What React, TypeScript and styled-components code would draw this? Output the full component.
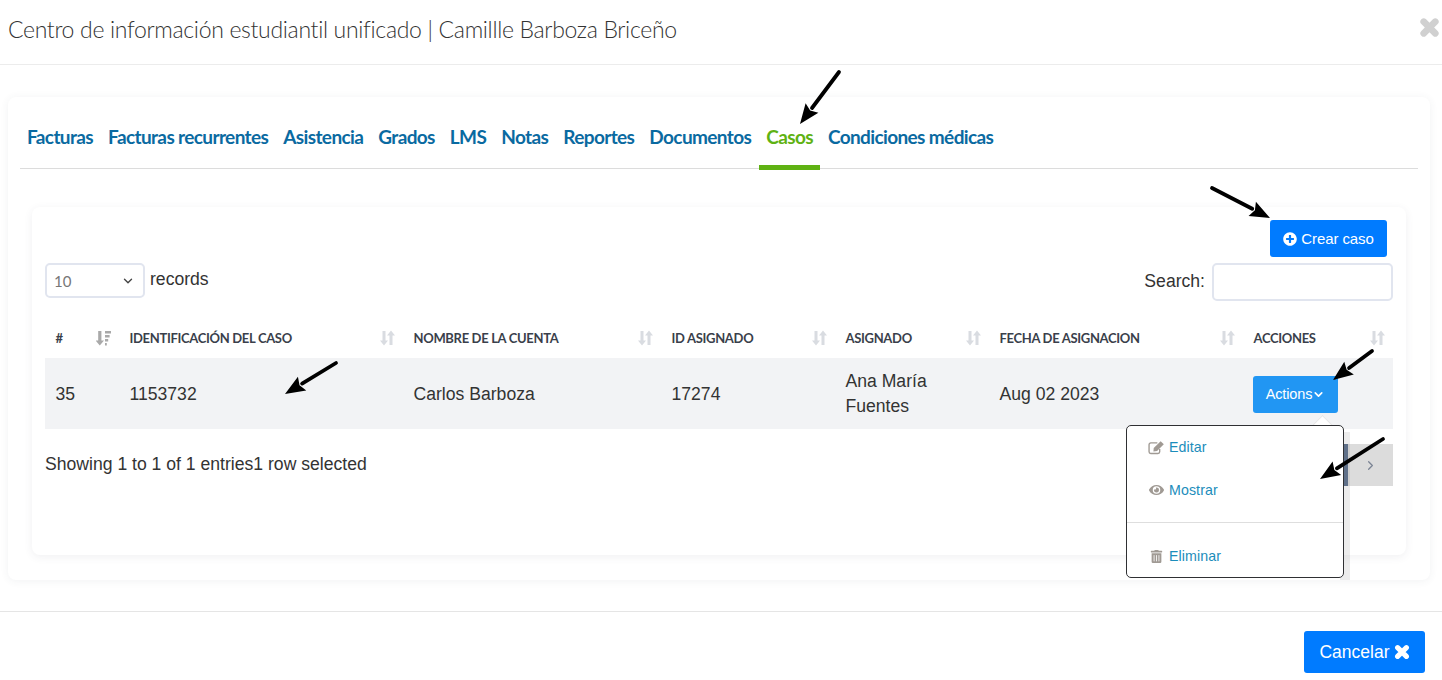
import React from "react";
import styled, { createGlobalStyle } from "styled-components";
import { FaEye, FaPlusCircle, FaTrashAlt } from "react-icons/fa";
import { ChevronDown, ChevronRight } from "lucide-react";

const GlobalStyle = createGlobalStyle`
  html, body {
    margin: 0;
    height: 100%;
    background: #fff;
    overflow: hidden;
  }
  * {
    box-sizing: border-box;
  }
  body {
    font-family: "Liberation Sans", Arial, sans-serif;
    color: #333;
  }
`;

const Page = styled.div`
  position: relative;
  width: 1442px;
  height: 680px;
  overflow: hidden;
`;

const Header = styled.header`
  height: 65px;
  border-bottom: 1px solid #ececec;
  padding: 0 0 7px 8px;
  display: flex;
  justify-content: space-between;
  align-items: center;
`;

const Title = styled.h1`
  margin: 0;
  font-family: Lato, sans-serif;
  font-weight: 300;
  font-size: 23px;
  color: #333;
  letter-spacing: -0.32px;
`;

const CloseBtn = styled.span`
  display: flex;
  color: #d0d0d0;
  margin: 0 2px 2px 0;
`;

const Body = styled.main`
  padding: 32px 12px 0 8px;
  height: 547px;
  border-bottom: 1px solid #e5e5e5;
`;

const OuterCard = styled.section`
  height: 483px;
  padding: 0 12px;
  border-radius: 8px;
  box-shadow: 0 1px 8px rgba(60, 70, 90, 0.07);
`;

const Tabs = styled.nav`
  height: 72px;
  border-bottom: 1px solid #dcdcdc;
  display: flex;
  align-items: flex-start;
`;

const Tab = styled.a<{ $active?: boolean }>`
  height: 73px;
  padding: 28px 7px 0;
  margin-right: 1px;
  font-family: Lato, sans-serif;
  font-weight: 700;
  font-size: 19px;
  letter-spacing: -0.62px;
  line-height: 23px;
  color: ${(props) => (props.$active ? "#5fb213" : "#0a6aa1")};
  border-bottom: 5px solid ${(props) => (props.$active ? "#5fb213" : "transparent")};
`;

const InnerCard = styled.section`
  margin: 38px 0 0 12px;
  width: 1374px;
  height: 348px;
  padding: 13px 13px 0;
  border-radius: 8px;
  box-shadow: 0 2px 8px rgba(60, 70, 90, 0.08);
`;

const CreateRow = styled.div`
  display: flex;
  justify-content: flex-end;
  padding-right: 6px;
`;

const CreateBtn = styled.button`
  width: 117px;
  height: 37px;
  border: none;
  border-radius: 3px;
  background: #007bff;
  color: #fff;
  font-family: "Liberation Sans", sans-serif;
  font-size: 15px;
  letter-spacing: -0.1px;
  display: flex;
  align-items: center;
  justify-content: center;
  gap: 4px;
`;

const Controls = styled.div`
  display: flex;
  justify-content: space-between;
  margin-top: 6px;
  height: 57px;
`;

const LengthControl = styled.label`
  display: flex;
  align-items: flex-start;
  gap: 5px;
  font-size: 17.6px;
  line-height: 32px;
`;

const SelectBox = styled.span`
  width: 100px;
  height: 35px;
  border: 2px solid #e1e5ef;
  border-radius: 5px;
  padding: 0 8px 0 7px;
  display: flex;
  align-items: center;
  justify-content: space-between;
  font-family: Lato, sans-serif;
  font-size: 15px;
  color: #777;
`;

const SearchControl = styled.label`
  display: flex;
  align-items: flex-start;
  gap: 7px;
  font-size: 17.6px;
  line-height: 36px;
`;

const SearchInput = styled.input`
  width: 181px;
  height: 38px;
  border: 2px solid #e1e5ef;
  border-radius: 5px;
  background: #fff;
`;

const Table = styled.table`
  width: 1348px;
  table-layout: fixed;
  border-collapse: collapse;
`;

const Th = styled.th`
  position: relative;
  height: 38px;
  padding: 0 10px 2px 10.5px;
  text-align: left;
  font-family: Lato, sans-serif;
  font-weight: 700;
  font-size: 13px;
  letter-spacing: -0.32px;
  color: #3a3f4b;
`;

const SortSlot = styled.span<{ $on?: boolean }>`
  position: absolute;
  right: 8px;
  top: 10px;
  display: flex;
  color: ${(props) => (props.$on ? "#a9a9a9" : "#d9dce1")};
`;

const Tr = styled.tr`
  background: #f2f3f5;
`;

const Td = styled.td`
  height: 71px;
  padding: 1px 10px 0 10.5px;
  font-size: 17.6px;
  line-height: 25px;
  color: #333;
`;

const ActionsBtn = styled.button`
  width: 85px;
  height: 37px;
  margin-left: -0.5px;
  border: none;
  border-radius: 3px;
  background: #2196f3;
  color: #fff;
  font-family: "Liberation Sans", sans-serif;
  font-size: 14.5px;
  letter-spacing: -0.15px;
  display: flex;
  align-items: center;
  justify-content: center;
`;

const Info = styled.div`
  margin-top: 23px;
  font-size: 17.6px;
  line-height: 24px;
`;

const Footer = styled.footer`
  display: flex;
  justify-content: flex-end;
  padding: 19px 17px 0 0;
`;

const CancelBtn = styled.button`
  width: 121px;
  height: 42px;
  border: none;
  border-radius: 3px;
  background: #007bff;
  color: #fff;
  font-family: "Liberation Sans", sans-serif;
  font-size: 17.5px;
  display: flex;
  align-items: center;
  justify-content: center;
  gap: 4px;
`;

const Pager = styled.div`
  position: absolute;
  left: 1344px;
  top: 444px;
  width: 49px;
  height: 42px;
  background: #dcdcdc;
  border-left: 4px solid #5b6f8c;
  color: #7b8494;
  display: flex;
  align-items: center;
  justify-content: center;
`;

const MenuShadow = styled.div`
  position: absolute;
  left: 1340px;
  top: 432px;
  width: 10px;
  height: 148px;
  background: rgba(120, 120, 120, 0.14);
`;

const MenuNotch = styled.div`
  position: absolute;
  left: 1315px;
  top: 418px;
  width: 15px;
  height: 15px;
  background: #fff;
  transform: rotate(45deg);
  border-top: 1px solid #e6e6e6;
  border-left: 1px solid #e6e6e6;
`;

const Menu = styled.div`
  position: absolute;
  left: 1126px;
  top: 425px;
  width: 218px;
  height: 153px;
  background: #fff;
  border: 1px solid #2f3033;
  border-radius: 5px;
  padding-top: 10px;
`;

const MenuItem = styled.a`
  height: 22px;
  margin-bottom: 21px;
  padding-left: 22px;
  display: flex;
  align-items: center;
  gap: 5px;
  font-size: 14.2px;
  letter-spacing: 0.1px;
  color: #1c8dbb;
`;

const MenuIcon = styled.span`
  display: flex;
  width: 15px;
  justify-content: center;
  color: #a09a94;
`;

const Divider = styled.hr`
  margin: 0 0 22px;
  height: 1px;
  border: none;
  background: #dedede;
`;

const ArrowLayer = styled.svg`
  position: absolute;
  left: 0;
  top: 0;
  pointer-events: none;
`;

const arrows: [number, number, number, number][] = [
  [839, 72, 800, 124],
  [1212, 188, 1270, 218],
  [336, 363, 285, 394],
  [1372, 351, 1333, 380],
  [1383, 439, 1320, 479],
];

function Arrow({ from }: { from: [number, number, number, number] }) {
  const [x1, y1, x2, y2] = from;
  const len = Math.hypot(x2 - x1, y2 - y1);
  const ux = (x2 - x1) / len;
  const uy = (y2 - y1) / len;
  const bx = x2 - ux * 20;
  const by = y2 - uy * 20;
  const nx = -uy * 8;
  const ny = ux * 8;
  return (
    <g>
      <line x1={x1} y1={y1} x2={bx} y2={by} stroke="#000" strokeWidth={3.8} strokeLinecap="round" />
      <polygon points={`${x2},${y2} ${bx + nx},${by + ny} ${bx + ux * 3},${by + uy * 3} ${bx - nx},${by - ny}`} fill="#000" />
    </g>
  );
}

function ChunkyX({ size }: { size: number }) {
  return (
    <svg width={size} height={size} viewBox="0 0 20 20">
      <path d="M4.5 4.5l11 11M15.5 4.5l-11 11" stroke="currentColor" strokeWidth={6.4} strokeLinecap="round" />
    </svg>
  );
}

function SortArrows() {
  return (
    <svg width="15" height="16" viewBox="0 0 15 16">
      <path d="M2.5 1h3v9.5H8L4 15.5 0 10.5h2.5z" fill="currentColor" />
      <path d="M9.5 15h3V5.5H15L11 .5 7 5.5h2.5z" fill="currentColor" />
    </svg>
  );
}

function SortAmount() {
  return (
    <svg width="15" height="16" viewBox="0 0 15 16">
      <path d="M2.2 1h3.2v9.5H8L3.8 15.5-.4 10.5h2.6z" fill="currentColor" />
      <path d="M9 1h6v2.4H9zM9 5h4.6v2.4H9zM9 9h3.2v2.4H9zM9 13h1.8v2.4H9z" fill="currentColor" />
    </svg>
  );
}

function EditSquare() {
  return (
    <svg width="17" height="15" viewBox="0 0 16 14" style={{ flex: "none" }}>
      <path d="M11 8.5v2.6a1.6 1.6 0 0 1-1.6 1.6H2.6A1.6 1.6 0 0 1 1 11.1V4.3a1.6 1.6 0 0 1 1.6-1.6h6.2" fill="none" stroke="currentColor" strokeWidth={1.3} />
      <path d="M5.4 7.4 11.9 1l3 3-6.4 6.4-3.4.4z" fill="currentColor" />
    </svg>
  );
}

const columns = [
  { label: "#", width: 74 },
  { label: "IDENTIFICACIÓN DEL CASO", width: 284 },
  { label: "NOMBRE DE LA CUENTA", width: 258 },
  { label: "ID ASIGNADO", width: 174 },
  { label: "ASIGNADO", width: 154 },
  { label: "FECHA DE ASIGNACION", width: 254 },
  { label: "ACCIONES", width: 150 },
];

const tabs = [
  "Facturas",
  "Facturas recurrentes",
  "Asistencia",
  "Grados",
  "LMS",
  "Notas",
  "Reportes",
  "Documentos",
  "Casos",
  "Condiciones médicas",
];

export default function App() {
  return (
    <Page>
      <GlobalStyle />
      <Header>
        <Title>Centro de información estudiantil unificado | Camillle Barboza Briceño</Title>
        <CloseBtn>
          <ChunkyX size={21} />
        </CloseBtn>
      </Header>
      <Body>
        <OuterCard>
          <Tabs>
            {tabs.map((tab) => (
              <Tab key={tab} $active={tab === "Casos"}>
                {tab}
              </Tab>
            ))}
          </Tabs>
          <InnerCard>
            <CreateRow>
              <CreateBtn>
                <FaPlusCircle size={14} />
                Crear caso
              </CreateBtn>
            </CreateRow>
            <Controls>
              <LengthControl>
                <SelectBox>
                  10
                  <ChevronDown size={14} color="#444" strokeWidth={2.4} />
                </SelectBox>
                records
              </LengthControl>
              <SearchControl>
                Search:
                <SearchInput />
              </SearchControl>
            </Controls>
            <Table>
              <colgroup>
                {columns.map((col) => (
                  <col key={col.label} width={col.width} />
                ))}
              </colgroup>
              <thead>
                <tr>
                  {columns.map((col, i) => (
                    <Th key={col.label}>
                      {col.label}
                      <SortSlot $on={i === 0}>{i === 0 ? <SortAmount /> : <SortArrows />}</SortSlot>
                    </Th>
                  ))}
                </tr>
              </thead>
              <tbody>
                <Tr>
                  <Td>35</Td>
                  <Td>1153732</Td>
                  <Td>Carlos Barboza</Td>
                  <Td>17274</Td>
                  <Td>Ana María Fuentes</Td>
                  <Td>Aug 02 2023</Td>
                  <Td>
                    <ActionsBtn>
                      Actions
                      <ChevronDown size={13} strokeWidth={3} />
                    </ActionsBtn>
                  </Td>
                </Tr>
              </tbody>
            </Table>
            <Info>Showing 1 to 1 of 1 entries1 row selected</Info>
          </InnerCard>
        </OuterCard>
      </Body>
      <Footer>
        <CancelBtn>
          Cancelar
          <ChunkyX size={16} />
        </CancelBtn>
      </Footer>
      <Pager>
        <ChevronRight size={15} />
      </Pager>
      <MenuShadow />
      <MenuNotch />
      <Menu>
        <MenuItem>
          <MenuIcon>
            <EditSquare />
          </MenuIcon>
          Editar
        </MenuItem>
        <MenuItem>
          <MenuIcon>
            <FaEye size={16} />
          </MenuIcon>
          Mostrar
        </MenuItem>
        <Divider />
        <MenuItem>
          <MenuIcon>
            <FaTrashAlt size={13} />
          </MenuIcon>
          Eliminar
        </MenuItem>
      </Menu>
      <ArrowLayer width="1442" height="680">
        {arrows.map((a) => (
          <Arrow key={a.join("-")} from={a} />
        ))}
      </ArrowLayer>
    </Page>
  );
}
